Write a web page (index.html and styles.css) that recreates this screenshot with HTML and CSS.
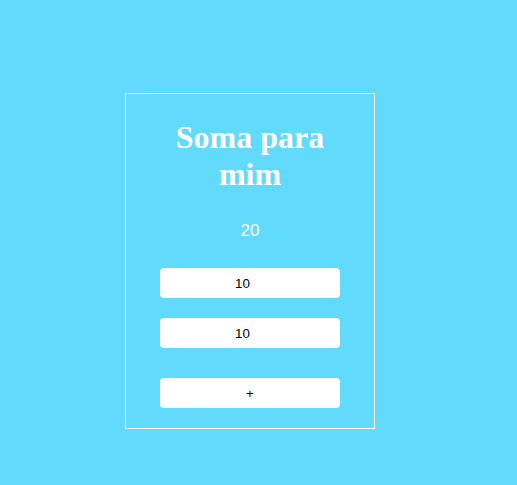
FILE: index.html
```html
<!DOCTYPE html>
<html lang="pt">
<head>
<meta charset="utf-8">
<title>Soma para mim</title>
<link rel="stylesheet" href="styles.css">
</head>
<body>
<main class="page">
  <section class="card">
    <h1 class="title">Soma para mim</h1>
    <p class="result">20</p>
    <input class="field field-first" type="number" value="10">
    <input class="field" type="number" value="10">
    <button class="add" type="button">+</button>
  </section>
</main>
</body>
</html>
```

FILE: styles.css
```css
html, body {
  margin: 0;
  padding: 0;
  background: #61dafb;
}

.page {
  display: flex;
  padding: 93px 0 0 125px;
}

.card {
  box-sizing: border-box;
  width: 250px;
  height: 336px;
  border: 1px solid #ffffff;
  padding: 0 34px;
  display: flex;
  flex-direction: column;
  align-items: center;
}

.title {
  margin: 25px 0 0;
  font-family: "Liberation Serif", "Times New Roman", serif;
  font-size: 32px;
  font-weight: bold;
  line-height: 37px;
  color: #ffffff;
  text-align: center;
}

.result {
  margin: 20px 0 0;
  font-family: "Liberation Sans", Arial, sans-serif;
  font-size: 17px;
  line-height: 36px;
  color: #ffffff;
}

.field,
.add {
  box-sizing: border-box;
  width: 180px;
  height: 30px;
  flex: none;
  border: none;
  border-radius: 4px;
  background: #ffffff;
  font-family: "Liberation Sans", Arial, sans-serif;
  font-size: 13.333px;
  color: #000000;
  text-align: center;
  padding: 1px 2px;
  outline: none;
}

.field {
  margin-top: 20px;
}

.field-first {
  margin-top: 19px;
}

.add {
  margin-top: 30px;
}
```
